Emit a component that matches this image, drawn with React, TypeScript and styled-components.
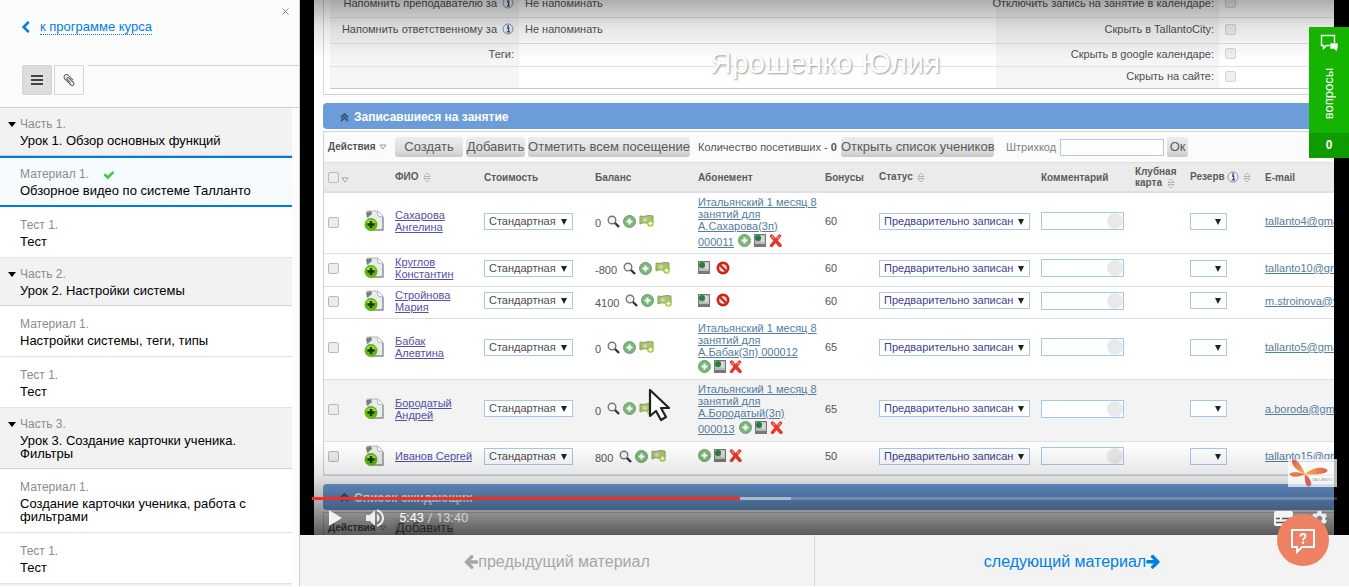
import React from "react";
import styled, { createGlobalStyle, css } from "styled-components";
import { MdSettings, MdVolumeUp } from "react-icons/md";

const GlobalStyle = createGlobalStyle`
  *, *::before, *::after { box-sizing: border-box; }
  body { margin: 0; background: #fff; font-family: "Liberation Sans", Arial, sans-serif; }
  button, input, select { font-family: inherit; margin: 0; }
`;

/* ---------- page ---------- */

const Page = styled.div`
  display: flex;
  height: calc(100vh - 1px);
  overflow: hidden;
`;

const Sidebar = styled.aside`
  flex: none;
  width: 300px;
  display: flex;
  flex-direction: column;
  background: #fcfcfc;
  border-right: 1px solid #d0d0d0;
`;

const Main = styled.main`
  flex: 1;
  min-width: 0;
  display: flex;
  flex-direction: column;
`;

/* ---------- sidebar ---------- */

const SidebarTop = styled.div`
  position: relative;
  display: flex;
  align-items: flex-start;
  height: 65px;
  padding: 19px 19px 0;
`;

const BackLink = styled.a`
  display: flex;
  align-items: center;
  gap: 8px;
  color: #0080e5;
  font-size: 13px;
  line-height: 15px;
  text-decoration: none;
  span { border-bottom: 1px dotted #0080e5; }
`;

const CloseButton = styled.button`
  position: absolute;
  top: 6px;
  right: 8px;
  display: flex;
  padding: 0;
  border: 0;
  background: none;
  color: #888;
`;

const Tools = styled.div`
  display: flex;
  height: 43px;
  padding-left: 22px;
  border-bottom: 1px solid #d2d2d2;
`;

const ToolButton = styled.button<{ $active?: boolean }>`
  display: flex;
  align-items: center;
  justify-content: center;
  width: 30px;
  height: 30px;
  margin-right: 2px;
  padding: 0;
  border: 1px solid ${(p) => (p.$active ? "#d2d2d2" : "#d6d6d6")};
  border-radius: 2px;
  background: ${(p) => (p.$active ? "#dedede" : "#fafafa")};
  color: ${(p) => (p.$active ? "#444" : "#555")};
`;

const ToolsLine = styled.div`
  flex: 1;
  margin-left: 2px;
  border-top: 1px solid #d2d2d2;
`;

const Lessons = styled.ul`
  flex: 1;
  min-height: 0;
  overflow: hidden;
  list-style: none;
  margin: 0 7px 0 0;
  padding: 0;
`;

const Lesson = styled.li<{ $kind: "section" | "item" | "active" }>`
  padding: 11px 20px 9px;
  border-bottom: 1px solid #e2e2e2;
  background: #fff;
  ${(p) =>
    p.$kind === "section" &&
    css`
      padding: 9px 20px 8px;
      border-bottom-color: #d2d2d2;
      background: #f2f2f2;
    `}
  ${(p) =>
    p.$kind === "active" &&
    css`
      padding: 9px 20px 8px;
      border-top: 2px solid #007ddc;
      border-bottom: 2px solid #007ddc;
      background: #f5fbff;
    `}
`;

const LessonLabel = styled.div<{ $section: boolean }>`
  display: flex;
  align-items: center;
  margin-bottom: 2px;
  color: #8c8c8c;
  font-size: 12px;
  line-height: 15px;
  svg { margin-left: 14px; color: #3ec93e; }
  ${(p) =>
    p.$section &&
    css`
      margin-left: -12px;
      &::before {
        content: "";
        margin-right: 4px;
        border: 4px solid transparent;
        border-top: 5px solid #000;
        border-bottom: 0;
      }
    `}
`;

const LessonTitle = styled.a`
  display: block;
  color: #000;
  font-size: 13px;
  line-height: 13px;
  text-decoration: none;
`;

type LessonData = { kind: "section" | "item" | "active"; label: string; title: string };

const lessons: LessonData[] = [
  { kind: "section", label: "Часть 1.", title: "Урок 1. Обзор основных функций" },
  { kind: "active", label: "Материал 1.", title: "Обзорное видео по системе Талланто" },
  { kind: "item", label: "Тест 1.", title: "Тест" },
  { kind: "section", label: "Часть 2.", title: "Урок 2. Настройки системы" },
  { kind: "item", label: "Материал 1.", title: "Настройки системы, теги, типы" },
  { kind: "item", label: "Тест 1.", title: "Тест" },
  { kind: "section", label: "Часть 3.", title: "Урок 3. Создание карточки ученика. Фильтры" },
  { kind: "item", label: "Материал 1.", title: "Создание карточки ученика, работа с фильтрами" },
  { kind: "item", label: "Тест 1.", title: "Тест" },
];

/* ---------- page icons ---------- */

const ChevronLeft = () => (
  <svg width="13" height="13" viewBox="0 0 1792 1792" fill="currentColor">
    <path d="M1427 301l-531 531 531 531q19 19 19 45t-19 45l-166 166q-19 19-45 19t-45-19l-742-742q-19-19-19-45t19-45l742-742q19-19 45-19t45 19l166 166q19 19 19 45t-19 45z" />
  </svg>
);

const CheckMark = () => (
  <svg width="12" height="12" viewBox="0 0 1792 1792" fill="currentColor">
    <path d="M1671 566q0 40-28 68l-724 724-136 136q-28 28-68 28t-68-28l-136-136-362-362q-28-28-28-68t28-68l136-136q28-28 68-28t68 28l294 295 656-657q28-28 68-28t68 28l136 136q28 28 28 68z" />
  </svg>
);

const Paperclip = () => (
  <svg width="14" height="14" viewBox="0 0 1792 1792" fill="currentColor">
    <path d="M1596 1385q0 117-79 196t-196 79q-135 0-235-100l-777-776q-113-115-113-271 0-159 110-270t269-111q158 0 273 113l605 606q10 10 10 22 0 16-30.5 46.5t-46.5 30.5q-13 0-23-10l-606-607q-79-77-181-77-106 0-179 75t-73 181q0 105 76 181l776 777q63 63 145 63 64 0 106-42t42-106q0-82-63-145l-581-581q-26-24-60-24-29 0-48 19t-19 48q0 32 25 59l410 410q10 10 10 22 0 16-31 47t-47 31q-12 0-22-10l-410-410q-63-61-63-149 0-82 57-139t139-57q88 0 149 63l581 581q100 98 100 235z" />
  </svg>
);

const Bars = () => (
  <svg width="12" height="10" viewBox="0 0 12 10" fill="currentColor">
    <rect width="12" height="2" />
    <rect y="4" width="12" height="2" />
    <rect y="8" width="12" height="2" />
  </svg>
);

const ArrowLeft = () => (
  <svg width="14" height="14" viewBox="0 -45 1536 1500" fill="currentColor">
    <path d="M1536 640v128q0 53-32.5 90.5t-84.5 37.5h-704l293 294q38 36 38 90t-38 90l-75 76q-37 37-90 37-52 0-91-37l-651-652q-37-37-37-90 0-52 37-91l651-650q38-38 91-38 52 0 90 38l75 74q38 38 38 91t-38 91l-293 293h704q52 0 84.5 37.500t32.500 90.500z" />
  </svg>
);

const ArrowRight = () => (
  <svg width="14" height="14" viewBox="-32 -45 1536 1540" fill="currentColor">
    <path d="M1472 704q0 54-37 91l-651 651q-39 37-91 37-51 0-90-37l-75-75q-38-38-38-91t38-91l293-293h-704q-52 0-84.500-37.500t-32.500-90.500v-128q0-53 32.500-90.500t84.500-37.500h704l-293-294q-38-36-38-90t38-90l75-75q38-38 90-38 53 0 91 38l651 651q37 35 37 90z" />
  </svg>
);

/* ---------- video stage ---------- */

const Stage = styled.section`
  position: relative;
  flex: 1;
  min-height: 0;
  padding: 0 15px 0 14px;
  overflow: hidden;
  background: #000;
`;

const Frame = styled.div`
  position: relative;
  height: 100%;
  padding-left: 9px;
  overflow: hidden;
  background: #fff;
  color: #555;
  font-size: 11px;
  line-height: 12px;
`;

const TopShade = styled.div`
  position: absolute;
  inset: 0 0 auto;
  height: 60px;
  background: linear-gradient(rgba(0, 0, 0, 0.32), rgba(0, 0, 0, 0.1) 45%, transparent);
`;

const BottomShade = styled.div`
  position: absolute;
  inset: auto 0 0;
  height: 92px;
  background: linear-gradient(transparent, rgba(0, 0, 0, 0.1) 35%, rgba(0, 0, 0, 0.34) 66%, rgba(0, 0, 0, 0.64));
`;

const Watermark = styled.div`
  position: absolute;
  top: 46px;
  left: 396px;
  color: #fff;
  font-size: 30px;
  line-height: 34px;
  white-space: nowrap;
  text-shadow: 1px 1px 2px #999;
`;

const Pointer = styled.svg`
  position: absolute;
  top: 388px;
  left: 334px;
`;

/* ---------- form in the frame ---------- */

const FormPanel = styled.div`
  margin-top: -9px;
  padding: 0 0 5px 6px;
  border-left: 1px solid #d8d8d8;
  border-bottom: 1px solid #d8d0d0;
`;

const FormRow = styled.div<{ $height: number; $last?: boolean }>`
  display: grid;
  grid-template-columns: 189px 477px 223px 1fr;
  height: ${(p) => p.$height}px;
  border-bottom: 1px solid ${(p) => (p.$last ? "#b4cddd" : "#e0e0e3")};
`;

const FormLabel = styled.label`
  display: flex;
  align-items: center;
  justify-content: flex-end;
  gap: 5px;
  padding: 0 5px 3px 0;
  background: #f5f5f6;
  color: #505050;
  white-space: nowrap;
`;

const FormValue = styled.div`
  display: flex;
  align-items: center;
  padding: 0 6px 3px;
`;

const SectionBar = styled.h2`
  display: flex;
  align-items: center;
  gap: 5px;
  height: 26px;
  margin: 8px 0 2px;
  padding: 2px 17px 0;
  border-radius: 4px 0 0 4px;
  background: #6d9dd9;
  color: #fff;
  font-size: 12px;
  line-height: 14px;
`;

const ListBox = styled.div`
  border: 1px solid #c9d4df;
  border-right: 0;
`;

const Toolbar = styled.div`
  display: flex;
  align-items: center;
  height: 31px;
  padding-left: 4px;
  border-bottom: 1px solid #e0e0e0;
  background: #fbfbfb;
  white-space: nowrap;
  > * { flex: none; }
`;

const Actions = styled.span`
  display: flex;
  align-items: center;
  gap: 3px;
  width: 67px;
  font-size: 10px;
  font-weight: bold;
`;

const GreyButton = styled.button<{ $width: number }>`
  width: ${(p) => p.$width}px;
  height: 20px;
  margin-right: 3px;
  padding: 0;
  border: 0;
  border-radius: 3px;
  background: linear-gradient(#ededed, #dcdcdc 70%, #c8c8c8);
  color: #5a5a5a;
  font-size: 13px;
  line-height: 18px;
  white-space: nowrap;
`;

const Counter = styled.span`
  width: 148px;
  padding-left: 5px;
`;

const Barcode = styled.label`
  display: flex;
  align-items: center;
  gap: 4px;
  margin: 0 3px 0 9px;
  color: #808080;
  input {
    width: 104px;
    height: 17px;
    padding: 0 4px;
    border: 1px solid #b3cbe6;
    background: #fff;
  }
`;

/* ---------- table ---------- */

const Table = styled.table`
  width: 100%;
  table-layout: fixed;
  border-collapse: collapse;
`;

const HeadCell = styled.th`
  height: 29px;
  padding: 0 0 0 4px;
  border-bottom: 2px solid #e0e0e4;
  background: #ebebec;
  color: #5c5c5c;
  font-size: 10px;
  line-height: 11px;
  text-align: left;
  white-space: nowrap;
  svg { margin-left: 2px; vertical-align: -3px; }
`;

const BodyRow = styled.tr<{ $height: number; $hover?: boolean }>`
  height: ${(p) => p.$height}px;
  border-bottom: 1px solid #dfdfe3;
  background: ${(p) => (p.$hover ? "#f3f3f4" : "#fff")};
`;

const Cell = styled.td`
  padding: 0 0 3px 4px;
  white-space: nowrap;
  overflow: hidden;
  > svg { display: block; }
`;

const PassCell = styled(Cell)`
  padding-bottom: 0;
`;

const Tick = styled.input`
  appearance: none;
  display: inline-block;
  width: 11px;
  height: 11px;
  border: 1px solid #b9b9b9;
  border-radius: 2px;
  background: #ececec;
  vertical-align: middle;
`;

const FaintTick = styled(Tick)`
  border-color: #d6d6d6;
  background: #efefef;
`;

const PersonLink = styled.a`
  display: block;
  color: #5252a6;
`;

const PassLink = styled.a`
  color: #557d9f;
`;

const IconLine = styled.span<{ $alone?: boolean }>`
  display: inline-flex;
  align-items: center;
  gap: 3px;
  padding-bottom: ${(p) => (p.$alone ? 4 : 1)}px;
  svg { display: block; }
`;

const PassTail = styled.span`
  display: flex;
  align-items: flex-end;
  gap: 4px;
  height: 18px;
  padding-bottom: 2px;
`;

const Balance = styled.span`
  display: flex;
  align-items: center;
  gap: 3px;
  b { font-weight: normal; padding-top: 4px; margin-right: 3px; }
`;

const SelectWrap = styled.span<{ $width: number }>`
  position: relative;
  display: block;
  width: ${(p) => p.$width}px;
  &::after {
    content: "";
    position: absolute;
    top: 6px;
    right: 6px;
    border: 3px solid transparent;
    border-top: 6px solid #222;
    border-bottom: 0;
  }
`;

const Select = styled.select<{ $color?: string }>`
  appearance: none;
  display: block;
  width: 100%;
  height: 17px;
  padding: 0 4px;
  border: 1px solid #a9c8e8;
  border-radius: 0;
  background: #fff;
  color: ${(p) => p.$color || "#4c4c4c"};
  font-size: 11px;
  line-height: 15px;
`;

const CommentField = styled.span`
  display: flex;
  align-items: center;
  justify-content: flex-end;
  width: 83px;
  height: 18px;
  border: 1px solid #a9c8e8;
  background: #fff;
  input {
    flex: 1;
    min-width: 0;
    height: 16px;
    padding: 0 3px;
    border: 0;
    background: none;
  }
  &::after {
    content: "";
    width: 16px;
    height: 16px;
    border-radius: 8px;
    background: #e9e9ea;
  }
`;

/* ---------- frame icons ---------- */

const InfoIcon = () => (
  <svg width="12" height="12" viewBox="0 0 12 12">
    <circle cx="6" cy="6" r="5" fill="#eef1f7" stroke="#8791a8" />
    <path d="M5 5h1.6v3.6M4.8 8.8h3.2" stroke="#33477e" strokeWidth="1.3" fill="none" />
    <circle cx="6.1" cy="3" r="0.9" fill="#33477e" />
  </svg>
);

const DownOutline = () => (
  <svg width="8" height="6" viewBox="0 0 8 6">
    <path d="M1 1h6L4 5z" fill="#fff" stroke="#999" />
  </svg>
);

const SortIcon = () => (
  <svg width="8" height="11" viewBox="0 0 8 11">
    <path d="M1 4.5h6L4 1zM1 6.5h6L4 10z" fill="#f4f4f4" stroke="#aaa" strokeWidth="0.9" />
  </svg>
);

const CollapseIcon = () => (
  <svg width="9" height="9" viewBox="0 0 9 9">
    <path d="M1 4.500L4.500 1 8 4.500M1 8L4.500 4.500 8 8" fill="none" stroke="#3b5478" strokeWidth="1.8" />
  </svg>
);

const CardIcon = () => (
  <svg width="20" height="22" viewBox="0 0 20 22">
    <path d="M3 1h11l5 5v14H6z" fill="#e9ebec" stroke="#b4b8ba" />
    <path d="M2 2.500l5-1.500 1 3-5 4z" fill="#777f80" />
    <path d="M13 1l1 5 5 1" fill="#fff" stroke="#b4b8ba" />
    <path d="M19 7v13H8" fill="none" stroke="#929799" strokeWidth="1.3" />
    <circle cx="7" cy="14.500" r="6.500" fill="#62b60c" />
    <path d="M2 12a6 5 0 0 1 10 0q-5 3-10 0z" fill="#9bdc42" />
    <path d="M7 11v7M3.500 14.500h7" stroke="#143c02" strokeWidth="2.400" />
  </svg>
);

const MagnifierIcon = () => (
  <svg width="13" height="13" viewBox="0 0 13 13">
    <circle cx="5" cy="5" r="3.800" fill="#f4f4f4" stroke="#777" strokeWidth="1.400" />
    <path d="M8 8l4 4" stroke="#333" strokeWidth="2.400" />
  </svg>
);

const PlusIcon = () => (
  <svg width="13" height="13" viewBox="0 0 13 13">
    <circle cx="6.500" cy="6.500" r="6" fill="#7db67d" stroke="#68a168" />
    <path d="M6.500 3.500v6M3.500 6.500h6" stroke="#fff" strokeWidth="2" />
  </svg>
);

const MoneyIcon = () => (
  <svg width="15" height="12" viewBox="0 0 15 12">
    <path d="M1 1q3 1 6 0t7 0v7q-3 1-6.500 0t-6.500 1z" fill="#a9c078" stroke="#86a050" />
    <circle cx="6" cy="5" r="2" fill="#cbdba4" />
    <circle cx="11.500" cy="8.500" r="3.300" fill="#a4c832" />
    <path d="M11.500 6.500v4M9.500 8.500h4" stroke="#fff" strokeWidth="1.400" />
  </svg>
);

const DeviceIcon = () => (
  <svg width="12" height="13" viewBox="0 0 12 13">
    <rect x="0.500" y="0.500" width="11" height="11.500" fill="#b9bdb9" stroke="#777" />
    <path d="M0 10h12v3H0z" fill="#777" />
    <circle cx="4" cy="4" r="3" fill="#23803a" />
    <path d="M7 2h3.500v6H7z" fill="#d5d8d5" />
  </svg>
);

const CrossIcon = () => (
  <svg width="13" height="13" viewBox="0 0 13 13">
    <path d="M2.500 2L11 11.500M10.500 2L2.500 11.500" stroke="#e3382a" strokeWidth="3.400" strokeLinecap="round" />
    <path d="M2.500 2L5 4.500M10.500 2L8 4.500" stroke="#f5917f" strokeWidth="1.200" />
  </svg>
);

const BanIcon = () => (
  <svg width="14" height="14" viewBox="0 0 14 14">
    <circle cx="7" cy="7" r="6.500" fill="#c4281e" />
    <circle cx="7" cy="7" r="3.800" fill="#f3dcd8" />
    <path d="M4 4l6 6" stroke="#c4281e" strokeWidth="2.400" />
  </svg>
);

/* ---------- frame data ---------- */

type Person = {
  name: string[];
  balance: string;
  pass?: string[];
  number?: string;
  icons: "edit" | "ban";
  bonus: string;
  email: string;
  height: number;
  hover?: boolean;
};

const people: Person[] = [
  { name: ["Сахарова", "Ангелина"], balance: "0", pass: ["Итальянский 1 месяц 8", "занятий для", "А.Сахарова(3п)"], number: "000011", icons: "edit", bonus: "60", email: "tallanto4@gmail.com", height: 61 },
  { name: ["Круглов", "Константин"], balance: "-800", icons: "ban", bonus: "60", email: "tallanto10@gmail.com", height: 33 },
  { name: ["Стройнова", "Мария"], balance: "4100", icons: "ban", bonus: "60", email: "m.stroinova@ya.ru", height: 32 },
  { name: ["Бабак", "Алевтина"], balance: "0", pass: ["Итальянский 1 месяц 8", "занятий для", "А.Бабак(3п) 000012"], icons: "edit", bonus: "65", email: "tallanto5@gmail.com", height: 61 },
  { name: ["Бородатый", "Андрей"], balance: "0", pass: ["Итальянский 1 месяц 8", "занятий для", "А.Бородатый(3п)"], number: "000013", icons: "edit", bonus: "65", email: "a.boroda@gmail.com", height: 62, hover: true },
  { name: ["Иванов Сергей"], balance: "800", icons: "edit", bonus: "50", email: "tallanto15@gmail.com", height: 33 },
];

const columns = [36, 31, 89, 111, 103, 127, 54, 162, 94, 55, 75];

function PassContent({ person }: { person: Person }) {
  const icons =
    person.icons === "edit" ? (
      <>
        <PlusIcon />
        <DeviceIcon />
        <CrossIcon />
      </>
    ) : (
      <>
        <DeviceIcon />
        <span />
        <BanIcon />
      </>
    );
  if (!person.pass) return <IconLine $alone>{icons}</IconLine>;
  return (
    <>
      {person.pass.map((line) => (
        <div key={line}>
          <PassLink href="#pass">{line}</PassLink>
        </div>
      ))}
      <PassTail>
        {person.number && <PassLink href="#pass">{person.number}</PassLink>}
        <IconLine>{icons}</IconLine>
      </PassTail>
    </>
  );
}

function VisitorsTable() {
  return (
    <Table>
      <colgroup>
        {columns.map((w, i) => (
          <col key={i} width={w} />
        ))}
        <col />
      </colgroup>
      <thead>
        <tr>
          <HeadCell>
            <Tick type="checkbox" aria-label="Выбрать всех" />
            <DownOutline />
          </HeadCell>
          <HeadCell />
          <HeadCell>ФИО <SortIcon /></HeadCell>
          <HeadCell>Стоимость</HeadCell>
          <HeadCell>Баланс</HeadCell>
          <HeadCell>Абонемент</HeadCell>
          <HeadCell>Бонусы</HeadCell>
          <HeadCell>Статус <SortIcon /></HeadCell>
          <HeadCell>Комментарий</HeadCell>
          <HeadCell>Клубная<br />карта <SortIcon /></HeadCell>
          <HeadCell>Резерв<InfoIcon /> <SortIcon /></HeadCell>
          <HeadCell>E-mail</HeadCell>
        </tr>
      </thead>
      <tbody>
        {people.map((p) => (
          <BodyRow key={p.email} $height={p.height} $hover={p.hover}>
            <Cell><Tick type="checkbox" aria-label={p.name.join(" ")} /></Cell>
            <Cell><CardIcon /></Cell>
            <Cell>
              {p.name.map((n) => (
                <PersonLink key={n} href="#person">{n}</PersonLink>
              ))}
            </Cell>
            <Cell>
              <SelectWrap $width={89}>
                <Select aria-label="Стоимость"><option>Стандартная</option></Select>
              </SelectWrap>
            </Cell>
            <Cell>
              <Balance>
                <b>{p.balance}</b>
                <MagnifierIcon />
                <PlusIcon />
                <MoneyIcon />
              </Balance>
            </Cell>
            <PassCell><PassContent person={p} /></PassCell>
            <Cell>{p.bonus}</Cell>
            <Cell>
              <SelectWrap $width={151}>
                <Select $color="#42428f" aria-label="Статус"><option>Предварительно записан</option></Select>
              </SelectWrap>
            </Cell>
            <Cell><CommentField><input type="text" aria-label="Комментарий" /></CommentField></Cell>
            <Cell />
            <Cell>
              <SelectWrap $width={37}>
                <Select aria-label="Резерв"><option></option></Select>
              </SelectWrap>
            </Cell>
            <Cell><PassLink href="#mail">{p.email}</PassLink></Cell>
          </BodyRow>
        ))}
      </tbody>
    </Table>
  );
}

const formRows = [
  { height: 27, label: "Напомнить преподавателю за", info: true, value: "Не напоминать", right: "Отключить запись на занятие в календаре:" },
  { height: 26, label: "Напомнить ответственному за", info: true, value: "Не напоминать", right: "Скрыть в TallantoCity:" },
  { height: 23, label: "Теги:", info: false, value: "", right: "Скрыть в google календаре:" },
  { height: 22, label: "", info: false, value: "", right: "Скрыть на сайте:" },
];

/* ---------- player ---------- */

const Player = styled.div`
  position: absolute;
  inset: auto 12px 0;
  padding-bottom: 6px;
  color: #eee;
`;

const Track = styled.div`
  position: relative;
  height: 3px;
  background: rgba(255, 255, 255, 0.2);
`;

const TrackPart = styled.div<{ $color: string }>`
  position: absolute;
  inset: 0 auto 0 0;
  background: ${(p) => p.$color};
`;

const Controls = styled.div`
  display: flex;
  align-items: center;
  height: 29px;
  padding: 7px 8px 0 17px;
`;

const ControlButton = styled.button<{ $gap: number }>`
  display: flex;
  margin-right: ${(p) => p.$gap}px;
  padding: 0;
  border: 0;
  background: none;
  color: inherit;
`;

const Time = styled.span`
  flex: 1;
  color: #d0d0d0;
  font-family: Roboto, sans-serif;
  font-size: 13px;
  line-height: 16px;
  b { color: #fff; font-weight: normal; }
`;

const Brand = styled.div`
  position: absolute;
  right: 12px;
  bottom: 48px;
  display: flex;
  align-items: center;
  width: 49px;
  height: 28px;
  background: rgba(255, 255, 255, 0.72);
`;

/* ---------- bottom navigation ---------- */

const BottomNav = styled.nav`
  display: flex;
  flex: none;
  height: 51px;
  padding-right: 20px;
  background: #f3f3f3;
`;

const NavLink = styled.a<{ $off?: boolean }>`
  flex: 1;
  display: flex;
  align-items: center;
  justify-content: center;
  padding-top: 2px;
  color: ${(p) => (p.$off ? "#a6a6a6" : "#0080e5")};
  font-size: 16px;
  line-height: 20px;
  text-decoration: none;
  & + & { border-left: 1px solid #d9d9d9; }
`;

/* ---------- floating parts ---------- */

const Questions = styled.button`
  position: fixed;
  top: 27px;
  right: 0;
  display: flex;
  flex-direction: column;
  align-items: center;
  width: 40px;
  padding: 7px 0 0;
  border: 0;
  background: #14b400;
  color: #fff;
  font-size: 13px;
`;

const QuestionsText = styled.span`
  margin: 16px 0 14px;
  line-height: 16px;
  writing-mode: vertical-rl;
  transform: rotate(180deg);
`;

const QuestionsCount = styled.span`
  width: 100%;
  background: #0f9a00;
  font-size: 12px;
  font-weight: bold;
  line-height: 25px;
`;

const HelpButton = styled.button`
  position: fixed;
  right: 20px;
  bottom: 21px;
  display: flex;
  align-items: center;
  justify-content: center;
  width: 52px;
  height: 52px;
  padding: 2px 0 0;
  border: 0;
  border-radius: 26px;
  background: #ee8164;
`;

export default function App() {
  return (
    <>
      <GlobalStyle />
      <Page>
        <Sidebar>
          <SidebarTop>
            <BackLink href="#course">
              <ChevronLeft />
              <span>к программе курса</span>
            </BackLink>
            <CloseButton aria-label="Закрыть">
              <svg width="11" height="11" viewBox="0 0 11 11">
                <path d="M2.500 2.500l6 6M8.500 2.500l-6 6" stroke="currentColor" />
              </svg>
            </CloseButton>
          </SidebarTop>
          <Tools>
            <ToolButton $active aria-label="Содержание"><Bars /></ToolButton>
            <ToolButton aria-label="Файлы"><Paperclip /></ToolButton>
            <ToolsLine />
          </Tools>
          <Lessons>
            {lessons.map((l, i) => (
              <Lesson key={i} $kind={l.kind}>
                <LessonLabel $section={l.kind === "section"}>
                  {l.label}
                  {l.kind === "active" && <CheckMark />}
                </LessonLabel>
                <LessonTitle href="#lesson">{l.title}</LessonTitle>
              </Lesson>
            ))}
            <Lesson $kind="section" />
          </Lessons>
        </Sidebar>

        <Main>
          <Stage>
            <Frame>
              <FormPanel>
                {formRows.map((r, i) => (
                  <FormRow key={r.right} $height={r.height} $last={i === 3}>
                    <FormLabel as="span">
                      {r.label}
                      {r.info && <InfoIcon />}
                    </FormLabel>
                    <FormValue>{r.value}</FormValue>
                    <FormLabel htmlFor={`option-${i}`}>{r.right}</FormLabel>
                    <FormValue><FaintTick type="checkbox" id={`option-${i}`} /></FormValue>
                  </FormRow>
                ))}
              </FormPanel>

              <SectionBar><CollapseIcon />Записавшиеся на занятие</SectionBar>
              <ListBox>
                <Toolbar>
                  <Actions>Действия <DownOutline /></Actions>
                  <GreyButton $width={68}>Создать</GreyButton>
                  <GreyButton $width={59}>Добавить</GreyButton>
                  <GreyButton $width={162}>Отметить всем посещение</GreyButton>
                  <Counter>Количество посетивших - <b>0</b></Counter>
                  <GreyButton $width={153}>Открыть список учеников</GreyButton>
                  <Barcode>
                    Штрихкод
                    <input type="text" />
                  </Barcode>
                  <GreyButton $width={21}>Ок</GreyButton>
                </Toolbar>
                <VisitorsTable />
              </ListBox>

              <SectionBar><CollapseIcon />Список ожидающих</SectionBar>
              <ListBox>
                <Toolbar>
                  <Actions>Действия <DownOutline /></Actions>
                  <GreyButton $width={59}>Добавить</GreyButton>
                </Toolbar>
              </ListBox>

              <Watermark>Ярошенко Юлия</Watermark>
              <Pointer width="24" height="34" viewBox="0 0 24 34">
                <path d="M2 2v26l6-5 5 9 5-3-5-9h8z" fill="#fff" stroke="#222" strokeWidth="2.200" strokeLinejoin="round" />
              </Pointer>
              <TopShade />
              <BottomShade />
            </Frame>

            <Brand>
              <svg width="49" height="28" viewBox="0 0 49 28">
                <defs>
                  <linearGradient id="petal" x1="0" y1="0" x2="1" y2="1">
                    <stop offset="0" stopColor="#e2575a" />
                    <stop offset="1" stopColor="#f2b33c" />
                  </linearGradient>
                  <linearGradient id="petalWide" x1="0" y1="0" x2="1" y2="0">
                    <stop offset="0" stopColor="#f4b640" />
                    <stop offset="1" stopColor="#e2575a" />
                  </linearGradient>
                </defs>
                <path d="M17 15C10 13 3 6 4 2s7-1 13 13z" fill="url(#petal)" />
                <path d="M17 15c-4 3-13 4-15 1s6-4 15-1z" fill="#e97a42" />
                <path d="M17 15c5-5 15-8 21-5s-7 7-21 5z" fill="url(#petalWide)" />
                <path d="M17 15c5 4 8 10 5 12s-6-3-5-12z" fill="#e05f58" />
                <text x="24" y="22" fontSize="4" fill="#999" fontFamily="Liberation Sans">TALLANTO</text>
              </svg>
            </Brand>

            <Player>
              <Track>
                <TrackPart $color="rgba(255, 255, 255, 0.4)" style={{ width: "46.7%" }} />
                <TrackPart $color="#f32c24" style={{ width: "41.8%" }} />
              </Track>
              <Controls>
                <ControlButton $gap={21} aria-label="Воспроизвести">
                  <svg width="13" height="16" viewBox="0 0 13 16">
                    <path d="M0 0v16l13-8z" fill="#f2f2f2" />
                  </svg>
                </ControlButton>
                <ControlButton $gap={12} aria-label="Звук"><MdVolumeUp size={24} /></ControlButton>
                <Time><b>5:43</b> / 13:40</Time>
                <ControlButton $gap={17} aria-label="Субтитры">
                  <svg width="19" height="15" viewBox="0 0 19 15">
                    <rect width="19" height="15" rx="2" fill="#f4f4f4" />
                    <path d="M2 7.500h4M8 7.500h9M2 11.500h9M13 11.500h4" stroke="#555" strokeWidth="1.600" />
                  </svg>
                </ControlButton>
                <ControlButton $gap={0} aria-label="Настройки"><MdSettings size={19} /></ControlButton>
              </Controls>
            </Player>
          </Stage>

          <BottomNav>
            <NavLink $off href="#prev"><ArrowLeft />предыдущий материал</NavLink>
            <NavLink href="#next">следующий материал<ArrowRight /></NavLink>
          </BottomNav>
        </Main>
      </Page>

      <Questions>
        <svg width="19" height="18" viewBox="0 0 19 18">
          <path d="M1.500 1.500h13v10h-8l-3 3v-3h-2z" fill="none" stroke="#fff" strokeWidth="1.400" />
          <path d="M10 9h8v6h-1v3l-3-3h-4z" fill="#fff" stroke="#14b400" strokeWidth="0.600" />
        </svg>
        <QuestionsText>вопросы</QuestionsText>
        <QuestionsCount>0</QuestionsCount>
      </Questions>

      <HelpButton aria-label="Помощь">
        <svg width="26" height="26" viewBox="0 0 26 26">
          <path d="M2 2h22v17H12l-5 5v-5H2z" fill="none" stroke="#fff" strokeWidth="2" />
          <path d="M10.500 8.500q0-2.500 2.500-2.500t2.500 2.300q0 1.200-1.300 2t-1.200 2" fill="none" stroke="#fff" strokeWidth="1.800" />
          <circle cx="13" cy="14.700" r="1.200" fill="#fff" />
        </svg>
      </HelpButton>
    </>
  );
}
